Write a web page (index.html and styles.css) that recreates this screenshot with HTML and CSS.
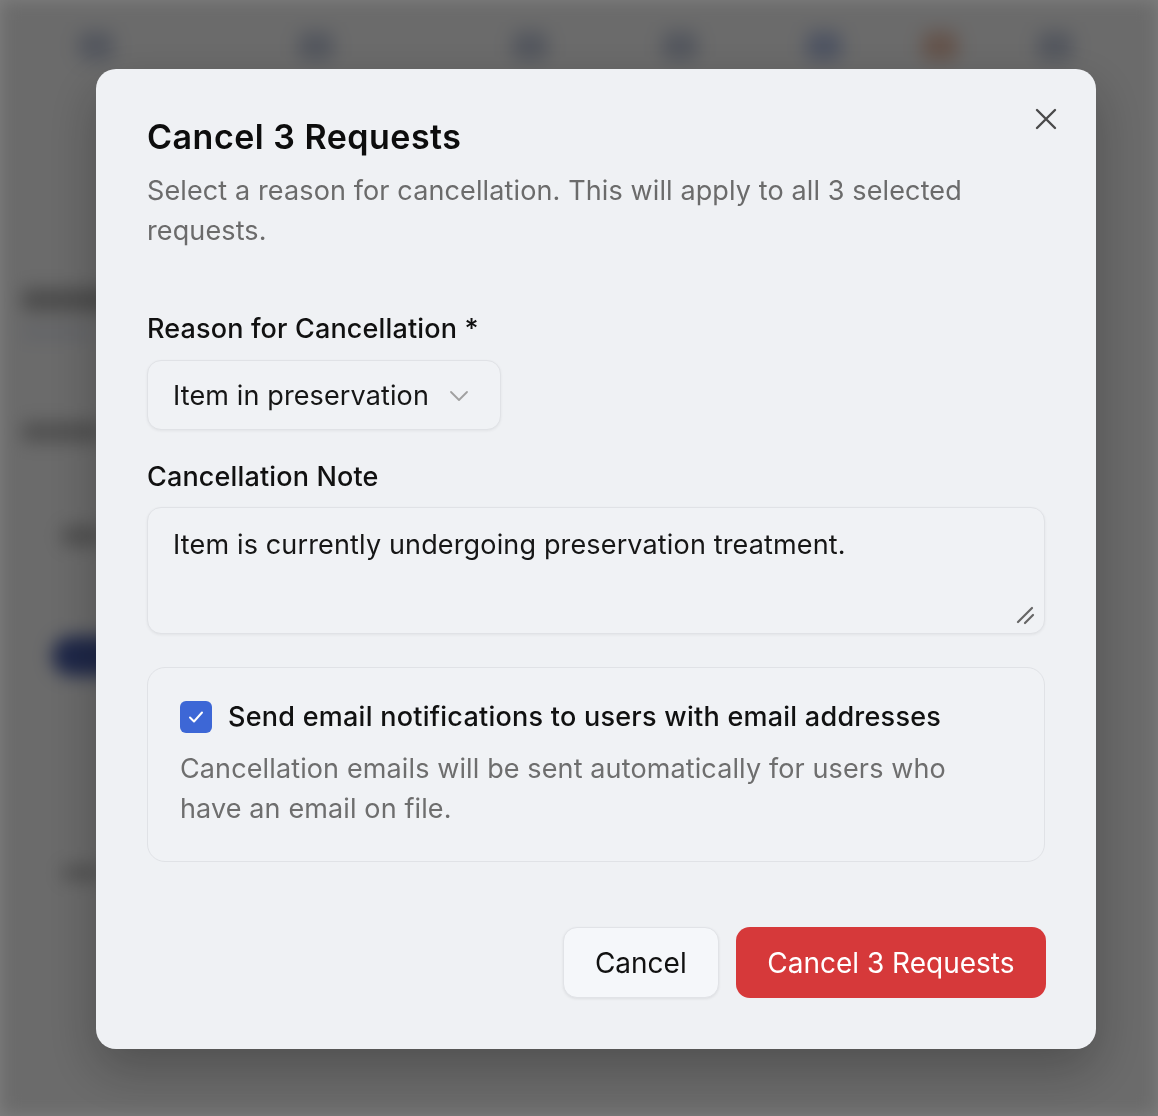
FILE: index.html
```html
<!DOCTYPE html>
<html lang="en">
<head>
<meta charset="utf-8">
<title>Cancel 3 Requests</title>
<link rel="stylesheet" href="styles.css">
</head>
<body>
<div class="page">
  <div class="page-top">
    <span class="blob b1"></span>
    <span class="blob b2"></span>
    <span class="blob b3"></span>
    <span class="blob b4"></span>
    <span class="blob b5"></span>
    <span class="blob b6"></span>
    <span class="blob b7"></span>
  </div>
  <div class="page-body">
    <div class="pg-heading"></div>
    <div class="pg-line"></div>
    <div class="pg-text t1"></div>
    <div class="pg-text t2"></div>
    <div class="pg-pill"></div>
    <div class="pg-text t3"></div>
  </div>
</div>

<div class="overlay">
  <div class="modal" role="dialog" aria-labelledby="modal-title">
    <button class="close" aria-label="Close">
      <svg viewBox="0 0 24 24" width="24" height="24" fill="none" stroke="currentColor" stroke-width="2.4" stroke-linecap="round"><path d="M3 3L21 21M21 3L3 21"/></svg>
    </button>
    <div class="header">
      <h2 id="modal-title" class="title">Cancel 3 Requests</h2>
      <p class="subtitle">Select a reason for cancellation. This will apply to all 3 selected requests.</p>
    </div>

    <div class="field field-reason">
      <label class="label">Reason for Cancellation *</label>
      <div class="select">
        <span>Item in preservation</span>
        <svg class="chev" viewBox="0 0 20 12" width="20" height="12" fill="none" stroke="currentColor" stroke-width="1.8" stroke-linecap="round" stroke-linejoin="round"><path d="M2 2L10 10L18 2"/></svg>
      </div>
    </div>

    <div class="field field-note">
      <label class="label">Cancellation Note</label>
      <div class="textarea">
        <span>Item is currently undergoing preservation treatment.</span>
        <svg class="grip" viewBox="0 0 20 20" width="20" height="20" fill="none" stroke="currentColor" stroke-width="2.2" stroke-linecap="round"><path d="M3 17L17 3M10 18L18 10"/></svg>
      </div>
    </div>

    <div class="notify">
      <div class="notify-row">
        <span class="checkbox">
          <svg viewBox="0 0 20 20" width="20" height="20" fill="none" stroke="#fff" stroke-width="2" stroke-linecap="round" stroke-linejoin="round"><path d="M4 10.5L8 14.5L16 5.5"/></svg>
        </span>
        <span class="notify-label">Send email notifications to users with email addresses</span>
      </div>
      <p class="notify-desc">Cancellation emails will be sent automatically for users who have an email on file.</p>
    </div>

    <div class="actions">
      <button class="btn btn-secondary">Cancel</button>
      <button class="btn btn-danger">Cancel 3 Requests</button>
    </div>
  </div>
</div>
</body>
</html>
```

FILE: styles.css
```css
* { box-sizing: border-box; }

html, body {
  margin: 0;
  padding: 0;
  width: 1158px;
  height: 1116px;
  overflow: hidden;
  font-family: Inter, "Noto Sans", "Liberation Sans", sans-serif;
}

/* blurred page behind the dialog */
.page {
  width: 1158px;
  height: 1116px;
  background: #d6d6d6;
  filter: blur(9px);
}

.page-top {
  display: flex;
  align-items: center;
  height: 92px;
  padding-left: 78px;
}

.blob {
  width: 36px;
  height: 30px;
  border-radius: 8px;
  background: #a9afbd;
  flex: none;
}
.b2 { margin-left: 184px; }
.b3 { margin-left: 178px; }
.b4 { margin-left: 114px; }
.b5 { margin-left: 108px; background: #9ea9c5; }
.b6 { margin-left: 80px; background: #c9a898; }
.b7 { margin-left: 79px; }

.page-body {
  display: flex;
  flex-direction: column;
  padding-left: 22px;
  padding-top: 196px;
}

.pg-heading { width: 90px; height: 24px; background: #9a9a9a; border-radius: 6px; }
.pg-line { width: 70px; height: 6px; background: #b2b8c8; margin-top: 18px; }
.pg-text { height: 20px; background: #a0a0a0; border-radius: 6px; }
.t1 { width: 80px; margin-top: 86px; }
.t2 { width: 40px; margin-top: 84px; margin-left: 40px; }
.pg-pill { width: 70px; height: 40px; border-radius: 20px; background: #3c4e90; margin-top: 90px; margin-left: 30px; }
.t3 { width: 40px; margin-top: 190px; margin-left: 40px; height: 14px; }

.overlay {
  position: fixed;
  inset: 0;
  background: rgba(0, 0, 0, 0.5);
  display: flex;
  align-items: flex-start;
  padding-left: 96px;
  padding-top: 69px;
}

.modal {
  position: relative;
  width: 1000px;
  height: 980px;
  background: #eff1f4;
  border-radius: 20px;
  padding: 48px 51px 51px 51px;
  display: flex;
  flex-direction: column;
  box-shadow: 0 20px 50px rgba(0, 0, 0, 0.25);
  color: #111;
}

.close {
  position: absolute;
  right: 38px;
  top: 38px;
  width: 24px;
  height: 24px;
  padding: 0;
  border: 0;
  background: transparent;
  color: #4a4a4a;
  display: flex;
}

.title {
  margin: 0;
  font-size: 34px;
  line-height: 40px;
  font-weight: 600;
  color: #0d0d0d;
  letter-spacing: 0.5px;
}

.subtitle {
  margin: 14px 0 0 0;
  font-size: 27px;
  line-height: 40px;
  color: #6b6b6b;
  letter-spacing: 0.12px;
  max-width: 840px;
}

.field {
  display: flex;
  flex-direction: column;
  align-items: flex-start;
}
.field-reason { margin-top: 60px; }
.field-note { margin-top: 29px; align-items: stretch; }

.label {
  font-size: 27px;
  line-height: 36px;
  font-weight: 500;
  color: #111;
  letter-spacing: 0.15px;
}

.select {
  margin-top: 13px;
  width: 354px;
  height: 70px;
  display: flex;
  align-items: center;
  justify-content: space-between;
  padding: 0 31px 0 25px;
  border: 1.5px solid #e0e2e6;
  border-radius: 14px;
  background: #f0f2f5;
  box-shadow: 0 1px 3px rgba(0, 0, 0, 0.06);
  font-size: 27px;
  letter-spacing: 0.12px;
  color: #161616;
}

.chev { color: #a0a0a0; margin-top: 1px; }

.textarea {
  position: relative;
  margin-top: 12px;
  height: 127px;
  padding: 19px 25px;
  border: 1.5px solid #e0e2e6;
  border-radius: 14px;
  background: #f0f2f5;
  box-shadow: 0 1px 3px rgba(0, 0, 0, 0.06);
  font-size: 27px;
  line-height: 36px;
  letter-spacing: 0.15px;
  color: #161616;
}

.grip {
  position: absolute;
  right: 9px;
  bottom: 8px;
  color: #666;
}

.notify {
  margin-top: 33px;
  border: 1.5px solid #e0e2e6;
  border-radius: 18px;
  background: #f0f2f5;
  padding: 31px 33px 32px 32px;
}

.notify-row {
  display: flex;
  align-items: center;
  gap: 16px;
}

.checkbox {
  width: 32px;
  height: 32px;
  border-radius: 6px;
  background: #3d67d6;
  display: flex;
  align-items: center;
  justify-content: center;
  flex: none;
}

.notify-label {
  font-size: 27px;
  line-height: 36px;
  font-weight: 500;
  color: #111;
  letter-spacing: 0.25px;
}

.notify-desc {
  margin: 14px 0 0 0;
  font-size: 27px;
  line-height: 40px;
  color: #6e6e6e;
  letter-spacing: 0.12px;
  max-width: 800px;
}

.actions {
  margin-top: auto;
  margin-right: -1px;
  display: flex;
  justify-content: flex-end;
  gap: 17px;
}

.btn {
  height: 71px;
  border-radius: 14px;
  font-family: inherit;
  font-size: 28px;
  padding: 0 32px;
  cursor: pointer;
}

.btn-secondary {
  background: #f5f7fa;
  border: 1.5px solid #e1e3e7;
  color: #111;
  box-shadow: 0 1px 3px rgba(0, 0, 0, 0.08);
  padding: 0 31px;
}

.btn-danger {
  background: #d6393a;
  border: 0;
  color: #fff;
  padding: 0 31.5px;
}
```
